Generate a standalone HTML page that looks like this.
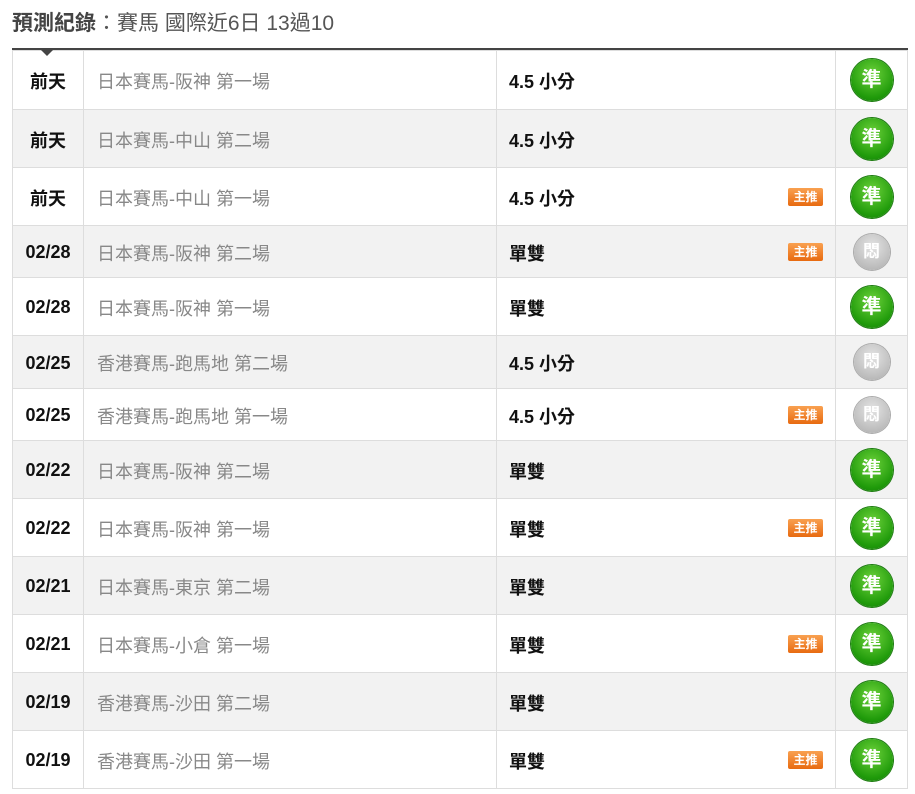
<!DOCTYPE html>
<html><head><meta charset="utf-8"><style>
body{margin:0;background:#fff;font-family:"Liberation Sans","Noto Sans CJK TC",sans-serif;width:915px;height:794px;overflow:hidden;position:relative}
.title{position:absolute;left:12px;top:9px;font-size:21px;color:#555;line-height:30px}
.title b{color:#444}
.bar{position:absolute;left:12px;top:48px;width:896px;height:2px;background:#444}
.tri{position:absolute;left:41px;top:50px;width:0;height:0;border-left:6px solid transparent;border-right:6px solid transparent;border-top:6px solid #444}
table{position:absolute;left:12px;top:50px;border-collapse:collapse;width:896px;table-layout:fixed}
td{border:1px solid #ddd;padding:0;font-size:18px;position:relative}
tr:nth-child(even) td{background:#f2f2f2}
td.d{width:70px;text-align:center;color:#111;font-weight:bold;padding-top:2px}
td.n{width:413px;color:#888;padding-left:13px;box-sizing:border-box;padding-top:2px}
td.t{width:339px;color:#111;font-weight:bold;padding-left:12px;box-sizing:border-box;padding-top:2px}
td.r{text-align:center}
.b{position:absolute;right:12px;top:50%;margin-top:-9px;width:35px;height:18px;border-radius:2px;background:linear-gradient(#f9a050,#e86a10);color:#fff;font-size:12px;line-height:18px;text-align:center;font-weight:bold}
.g,.x{display:inline-block;border-radius:50%;color:#fff;font-weight:bold;text-align:center;vertical-align:middle}
.g{width:42px;height:42px;line-height:42px;font-size:20px;background:radial-gradient(circle at 50% 35%,#6cd23a,#1f9a0a 70%,#16780a);box-shadow:0 0 0 1px #1a7a0d}
.x{width:36px;height:36px;line-height:36px;font-size:17px;background:radial-gradient(circle at 50% 35%,#e4e4e4,#bdbdbd 70%,#a8a8a8);box-shadow:0 0 0 1px #aaa}
</style></head><body>
<div class="title"><b>預測紀錄</b>：賽馬 國際近6日 13過10</div>
<div class="bar"></div>
<table>
<tr style="height:59px"><td class="d">前天</td><td class="n">日本賽馬-阪神 第一場</td><td class="t">4.5 小分</td><td class="r"><span class="g">準</span></td></tr>
<tr style="height:58px"><td class="d">前天</td><td class="n">日本賽馬-中山 第二場</td><td class="t">4.5 小分</td><td class="r"><span class="g">準</span></td></tr>
<tr style="height:58px"><td class="d">前天</td><td class="n">日本賽馬-中山 第一場</td><td class="t">4.5 小分<span class="b">主推</span></td><td class="r"><span class="g">準</span></td></tr>
<tr style="height:52px"><td class="d">02/28</td><td class="n">日本賽馬-阪神 第二場</td><td class="t">單雙<span class="b">主推</span></td><td class="r"><span class="x">悶</span></td></tr>
<tr style="height:58px"><td class="d">02/28</td><td class="n">日本賽馬-阪神 第一場</td><td class="t">單雙</td><td class="r"><span class="g">準</span></td></tr>
<tr style="height:53px"><td class="d">02/25</td><td class="n">香港賽馬-跑馬地 第二場</td><td class="t">4.5 小分</td><td class="r"><span class="x">悶</span></td></tr>
<tr style="height:52px"><td class="d">02/25</td><td class="n">香港賽馬-跑馬地 第一場</td><td class="t">4.5 小分<span class="b">主推</span></td><td class="r"><span class="x">悶</span></td></tr>
<tr style="height:58px"><td class="d">02/22</td><td class="n">日本賽馬-阪神 第二場</td><td class="t">單雙</td><td class="r"><span class="g">準</span></td></tr>
<tr style="height:58px"><td class="d">02/22</td><td class="n">日本賽馬-阪神 第一場</td><td class="t">單雙<span class="b">主推</span></td><td class="r"><span class="g">準</span></td></tr>
<tr style="height:58px"><td class="d">02/21</td><td class="n">日本賽馬-東京 第二場</td><td class="t">單雙</td><td class="r"><span class="g">準</span></td></tr>
<tr style="height:58px"><td class="d">02/21</td><td class="n">日本賽馬-小倉 第一場</td><td class="t">單雙<span class="b">主推</span></td><td class="r"><span class="g">準</span></td></tr>
<tr style="height:58px"><td class="d">02/19</td><td class="n">香港賽馬-沙田 第二場</td><td class="t">單雙</td><td class="r"><span class="g">準</span></td></tr>
<tr style="height:58px"><td class="d">02/19</td><td class="n">香港賽馬-沙田 第一場</td><td class="t">單雙<span class="b">主推</span></td><td class="r"><span class="g">準</span></td></tr>
</table>
<div class="tri"></div>
</body></html>
